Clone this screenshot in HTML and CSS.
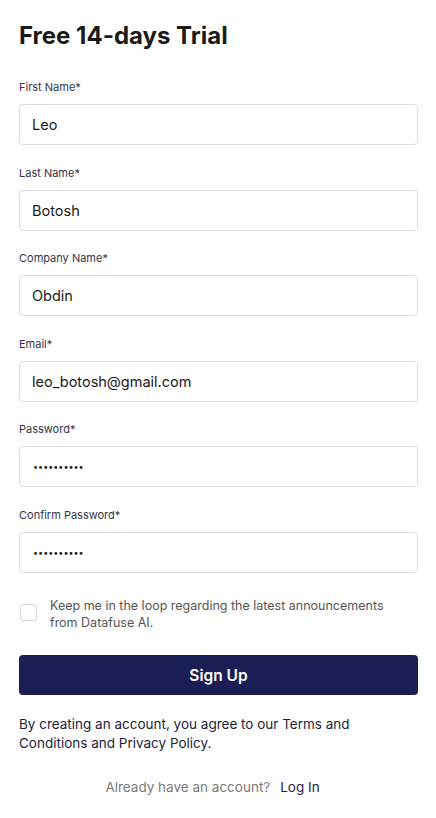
FILE: index.html
```html
<!DOCTYPE html>
<html lang="en">
<head>
<meta charset="utf-8">
<title>Free 14-days Trial</title>
<link rel="stylesheet" href="styles.css">
</head>
<body>
<main class="page">
  <h1 class="title">Free 14-days Trial</h1>
  <form class="form">
    <div class="field">
      <label class="label">First Name*</label>
      <div class="input">Leo</div>
    </div>
    <div class="field">
      <label class="label">Last Name*</label>
      <div class="input">Botosh</div>
    </div>
    <div class="field">
      <label class="label">Company Name*</label>
      <div class="input">Obdin</div>
    </div>
    <div class="field">
      <label class="label">Email*</label>
      <div class="input">leo_botosh@gmail.com</div>
    </div>
    <div class="field">
      <label class="label">Password*</label>
      <div class="input dots">••••••••••</div>
    </div>
    <div class="field">
      <label class="label">Confirm Password*</label>
      <div class="input dots">••••••••••</div>
    </div>
    <div class="check-row">
      <span class="checkbox"></span>
      <span class="check-text">Keep me in the loop regarding the latest announcements from Datafuse AI.</span>
    </div>
    <button type="button" class="submit">Sign Up</button>
  </form>
  <p class="terms">By creating an account, you agree to our Terms and Conditions and Privacy Policy.</p>
  <p class="login"><span class="muted">Already have an account?</span><span class="link">Log In</span></p>
</main>
</body>
</html>
```
FILE: styles.css
```css
* { box-sizing: border-box; }
html, body { margin: 0; padding: 0; background: #fff; }
body {
  font-family: "Inter", "Noto Sans", sans-serif;
  color: #1c1c2e;
}
.page {
  padding: 20px 18px 0 19px;
}
.title {
  margin: 0;
  font-size: 24px;
  line-height: 32px;
  font-weight: 700;
  color: #1a1a1a;
  letter-spacing: 0;
}
.form {
  margin-top: 27px;
  display: flex;
  flex-direction: column;
}
.field {
  display: flex;
  flex-direction: column;
  margin-bottom: 19.5px;
}
.label {
  font-size: 11px;
  line-height: 16px;
  color: #33334a;
  margin-bottom: 9px;
}
.input {
  height: 41px;
  border: 1px solid #dcdcdc;
  border-radius: 4px;
  padding: 0 12px;
  display: flex;
  align-items: center;
  font-size: 14.5px;
  color: #1a1a1a;
}
.dots {
  font-size: 9px;
  letter-spacing: 0;
  padding-left: 13px;
}
.check-row {
  display: flex;
  align-items: flex-start;
  gap: 13px;
  margin-top: 6px;
  padding-left: 1px;
  padding-right: 24px;
}
.checkbox {
  flex: none;
  width: 17px;
  height: 17px;
  margin-top: 6px;
  border: 1.5px solid #d4d4d4;
  border-radius: 3px;
}
.check-text {
  font-size: 12.5px;
  line-height: 16.5px;
  color: #555;
}
.submit {
  margin-top: 24px;
  height: 40px;
  border: 0;
  border-radius: 4px;
  background: #1b1e55;
  color: #fff;
  font-family: inherit;
  font-size: 15.5px;
  font-weight: 600;
}
.terms {
  margin: 20px 0 0;
  font-size: 13.5px;
  line-height: 19px;
  color: #1c1c3a;
}
.login {
  margin: 25px 0 0;
  padding-right: 12px;
  text-align: center;
  font-size: 13.5px;
  line-height: 18px;
}
.muted { color: #7a7a7a; margin-right: 10px; }
.link { color: #1c1c4a; }
```
